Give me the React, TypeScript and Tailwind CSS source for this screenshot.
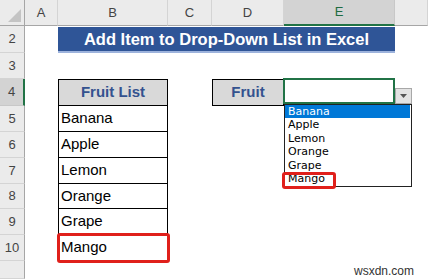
import React from 'react';

const colHeaders = [
  { label: 'A', cls: 'col-start-2' },
  { label: 'B', cls: 'col-start-3' },
  { label: 'C', cls: 'col-start-4' },
  { label: 'D', cls: 'col-start-5' },
  { label: 'E', cls: 'col-start-6', active: true },
  { label: '', cls: 'col-start-7' },
];

const rowHeaders = [
  { label: '2', cls: 'row-start-2' },
  { label: '3', cls: 'row-start-3' },
  { label: '4', cls: 'row-start-4', active: true },
  { label: '5', cls: 'row-start-5' },
  { label: '6', cls: 'row-start-6' },
  { label: '7', cls: 'row-start-7' },
  { label: '8', cls: 'row-start-8' },
  { label: '9', cls: 'row-start-9' },
  { label: '10', cls: 'row-start-10' },
  { label: '', cls: 'row-start-11' },
];

const fruitRows = [
  { name: 'Banana', cls: 'row-start-5' },
  { name: 'Apple', cls: 'row-start-6' },
  { name: 'Lemon', cls: 'row-start-7' },
  { name: 'Orange', cls: 'row-start-8' },
  { name: 'Grape', cls: 'row-start-9' },
  { name: 'Mango', cls: 'row-start-10', marked: true },
];

const App: React.FC = () => {
  return (
    <div className="relative w-[428px] h-[279px] overflow-hidden bg-white font-['Liberation_Sans',Arial,sans-serif]">
      <div className="grid w-full h-full grid-cols-[25px_33px_110px_44px_72px_111px_1fr] grid-rows-[26px_27px_26px_27px_26px_26px_26px_25px_26px_26px_1fr]">
        {/* corner */}
        <div className="col-start-1 row-start-1 flex items-end justify-end pr-[3px] pb-[3px] bg-[#ebebeb] border-r border-b border-[#a6a6a6]">
          <svg width="13" height="13" viewBox="0 0 13 13">
            <path d="M13 0 L13 13 L0 13 Z" fill="#c4c4c4" />
          </svg>
        </div>

        {colHeaders.map((c) => (
          <div
            key={c.cls}
            className={`${c.cls} row-start-1 flex items-center justify-center text-[13px] ${
              c.active
                ? 'bg-[#d3d3d3] text-[#1e6b41] border-b-2 border-b-[#217346] border-r border-r-[#c8c8c8]'
                : 'bg-[#ebebeb] text-[#444] border-b border-b-[#a6a6a6] border-r border-r-[#d4d4d4]'
            }`}
          >
            {c.label}
          </div>
        ))}

        {rowHeaders.map((r) => (
          <div
            key={r.cls}
            className={`col-start-1 ${r.cls} flex items-center justify-center text-[13px] ${
              r.active
                ? 'bg-[#d3d3d3] text-[#444] border-r-2 border-r-[#217346] border-b border-b-[#c8c8c8]'
                : 'bg-[#ebebeb] text-[#444] border-r border-r-[#a6a6a6] border-b border-b-[#d4d4d4]'
            }`}
          >
            {r.label}
          </div>
        ))}

        {/* title */}
        <div className="col-start-3 col-end-7 row-start-2 mt-px flex items-center justify-center bg-[#2f5597] border-b-2 border-b-[#9db3dc] text-white font-bold text-[16.5px]">
          Add Item to Drop-Down List in Excel
        </div>

        {/* fruit list table */}
        <div className="col-start-3 row-start-4 flex items-center justify-center bg-[#d9d9d9] border border-black text-[#34528f] font-bold text-[15px]">
          Fruit List
        </div>
        {fruitRows.map((f) => (
          <div
            key={f.name}
            className={`col-start-3 ${f.cls} relative flex items-center pl-[2px] border-x border-b border-black text-black text-[15px]`}
          >
            {f.name}
            {f.marked && (
              <span className="absolute -left-[2px] -right-[3px] -top-[2px] -bottom-[3px] border-[3px] border-[#e0201b] rounded-[3px]" />
            )}
          </div>
        ))}

        {/* fruit label + selected cell */}
        <div className="col-start-5 row-start-4 flex items-center justify-center bg-[#d9d9d9] border border-black text-[#34528f] font-bold text-[15px]">
          Fruit
        </div>
        <div className="col-start-6 row-start-4 -mt-px -ml-px mb-[2px] border-2 border-[#217346] bg-white" />
      </div>

      {/* drop-down arrow */}
      <div className="absolute left-[395px] top-[88px] w-[17px] h-[16px] flex items-center justify-center bg-[#e3e3e3] border border-[#a8a8a8]">
        <svg width="7" height="4" viewBox="0 0 7 4">
          <path d="M0 0 L7 0 L3.5 4 Z" fill="#555" />
        </svg>
      </div>

      {/* drop-down list */}
      <div className="absolute left-[284px] top-[104px] w-[128px] h-[83px] bg-white border border-[#222] font-['DejaVu_Sans',sans-serif] text-[11px] text-black">
        <div className="flex flex-col">
          {fruitRows.map((f, i) => (
            <div
              key={f.name}
              className={`h-[13.4px] leading-[13.4px] pl-[3px] ${i === 0 ? 'bg-[#0078d7] text-white mr-px' : ''}`}
            >
              {f.name}
            </div>
          ))}
        </div>
        <span className="absolute left-[-3px] top-[67px] w-[54px] h-[17px] border-[3px] border-[#e0201b] rounded-[3px]" />
      </div>

      {/* watermark */}
      <div className="absolute left-[354px] top-[262px] text-[12px] text-[#333]">wsxdn.com</div>
    </div>
  );
};

export default App;
